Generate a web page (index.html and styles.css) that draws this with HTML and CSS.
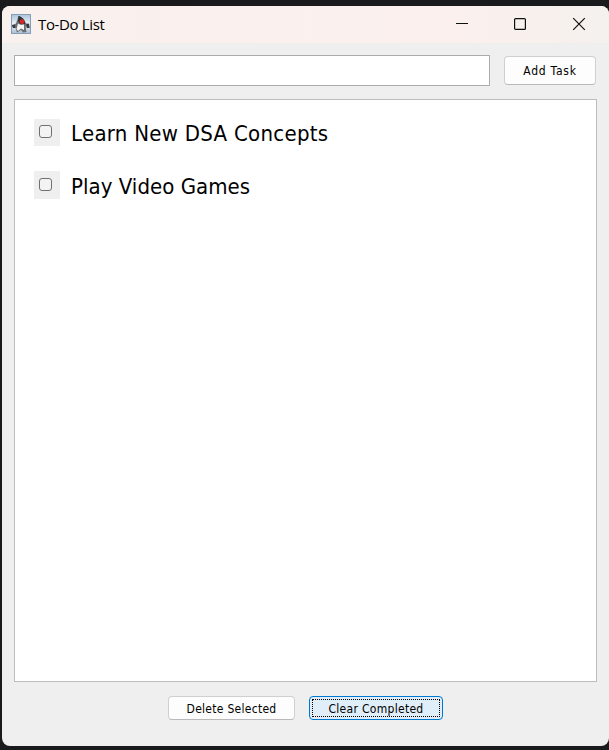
FILE: index.html
```
<!DOCTYPE html>
<html lang="en">
<head>
<meta charset="utf-8">
<title>To-Do List</title>
<link rel="stylesheet" href="styles.css">
</head>
<body>
<div class="window">
  <header class="titlebar">
    <svg class="app-icon" width="20" height="20" viewBox="0 0 20 20">
      <defs><linearGradient id="sky" x1="0" y1="0" x2="0" y2="1"><stop offset="0" stop-color="#a9c2da"/><stop offset=".5" stop-color="#edf2f7"/><stop offset="1" stop-color="#a9bfd6"/></linearGradient></defs>
      <rect x=".5" y=".5" width="19" height="19" fill="url(#sky)" stroke="#879db5"/>
      <path d="M7.5 2C11 3 14 6 14.5 9.5L18 9.5L19 14L16 14L14.5 12L15.5 18L12 18.5L10 16L6 18.5L4.5 14L2 14L1 11L5 9.5Z" fill="#6b6f73"/>
      <path d="M7.5 2C11 2.5 14 6 14.5 10L9 10L7 7Z" fill="#303338"/>
      <path d="M7 9.5L10 11L13 10.5L13 16L10 14.5L7 17L5.5 15Z" fill="#f5f5f5"/>
      <path d="M1 11H4V14H2ZM15.500 10H18V14H16Z" fill="#34393e"/>
      <circle cx="11" cy="7.7" r="2.4" fill="#d4272a"/>
    </svg>
    <h1 class="title">To-Do List</h1>
    <div class="controls">
      <svg width="14" height="14" viewBox="0 0 14 14"><path d="M1 6.5H13"/></svg>
      <svg width="14" height="14" viewBox="0 0 14 14"><rect x="1.6" y="1.6" width="10.8" height="10.8" rx="1"/></svg>
      <svg width="14" height="14" viewBox="0 0 14 14"><path d="M1.2 1.2L12.8 12.8M12.8 1.2L1.2 12.8"/></svg>
    </div>
  </header>
  <main class="content">
    <div class="entry">
      <input class="field" type="text" aria-label="Task">
      <button class="button add"><span class="label-add">Add Task</span></button>
    </div>
    <ul class="tasks">
      <li class="task"><span class="check"><span class="box"></span></span><span class="name learn">Learn New DSA Concepts</span></li>
      <li class="task"><span class="check"><span class="box"></span></span><span class="name play">Play Video Games</span></li>
    </ul>
    <div class="actions">
      <button class="button delete"><span class="label-delete">Delete Selected</span></button>
      <button class="button clear"><span class="label-clear">Clear Completed</span></button>
    </div>
  </main>
</div>
</body>
</html>
```
FILE: styles.css
```
* { box-sizing: border-box; }
body {
  margin: 0;
  height: 750px;
  padding: 6px 0 4px 2px;
  overflow: hidden;
  background: #191a1c;
  font-family: "DejaVu Sans Condensed", "DejaVu Sans", sans-serif;
  font-stretch: condensed;
  color: #000;
}
.window {
  height: 740px;
  display: flex;
  flex-direction: column;
  background: #efefef;
  border-radius: 8px;
  overflow: hidden;
}
.titlebar {
  height: 37px;
  flex: none;
  display: flex;
  align-items: center;
  padding: 0 23px 1px 9px;
  background: linear-gradient(90deg, #f9f1ee 0%, #fbf0ed 75%, #f5f1ee 100%);
}
.title {
  margin: 0 auto 0 7px;
  font: 400 15px/20px "Open Sans", sans-serif;
  letter-spacing: -0.35px;
}
.controls {
  display: grid;
  grid-template-columns: 58px 59px 14px;
}
.controls svg {
  display: block;
  fill: none;
  stroke: #111;
  stroke-width: 1.2;
}
.content {
  padding: 12px 12px 0;
}
.entry {
  display: flex;
  align-items: center;
  gap: 14px;
}
.field {
  width: 476px;
  height: 31px;
  border: 1px solid #abadab;
  background: #fff;
  outline: none;
}
.button {
  padding: 0;
  border: 1px solid #d0d0d0;
  border-bottom-color: #b9b9b9;
  border-radius: 4px;
  background: #fdfdfd;
  font: inherit;
  font-size: 12px;
  line-height: 16px;
  white-space: nowrap;
  color: #000;
}
.add { width: 92px; height: 29px; letter-spacing: 0.75px; }
.tasks {
  width: 583px;
  height: 583px;
  margin: 13px 0 14px;
  padding: 19px;
  border: 1px solid #bdbdbd;
  background: #fff;
  list-style: none;
}
.task {
  height: 53px;
  display: flex;
  gap: 11px;
}
.check {
  width: 26px;
  height: 27px;
  padding: 6px 0 0 5px;
  background: #efefef;
}
.task + .task .check { height: 28px; margin-top: -1px; padding-top: 7px; }
.box {
  display: block;
  width: 13px;
  height: 13px;
  border: 1px solid #707070;
  border-radius: 3px;
  background: #f3f3f3;
}
.name {
  font-size: 22px;
  line-height: 30px;
  white-space: nowrap;
}
.learn { letter-spacing: 0.28px; }
.play { letter-spacing: 0.04px; }
.actions {
  display: flex;
  gap: 14px;
  padding-left: 154px;
}
.delete {
  width: 127px;
  height: 24px;
  padding-top: 2px;
  letter-spacing: 0.28px;
}
.clear {
  width: 134px;
  height: 24px;
  border-color: #0078d0;
  background: #e0eef9;
  padding: 2px;
  letter-spacing: 0.3px;
}
.label-clear {
  display: block;
  height: 18px;
  border: 1px dotted #000;
  line-height: 18px;
}
```
